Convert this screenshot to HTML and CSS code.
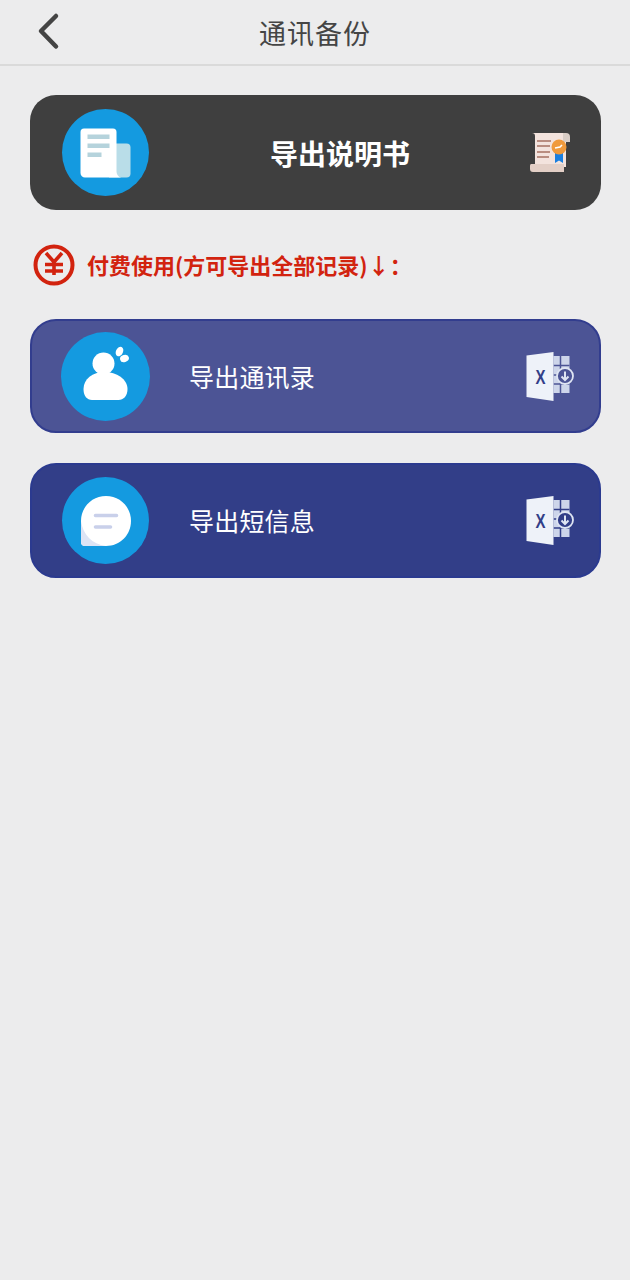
FILE: index.html
```html
<!DOCTYPE html>
<html lang="zh-CN">
<head>
    <meta charset="UTF-8">
    <meta name="viewport" content="width=device-width, initial-scale=1.0">
    <title>通讯备份</title>
    <link rel="stylesheet" href="styles.css">
</head>
<body>

    <header class="topbar">
        <a class="back" href="#">
            <svg width="24" height="38" viewBox="0 0 24 38"><path d="M20 4 L5 19 L20 34.5" fill="none" stroke="#444" stroke-width="4.5" stroke-linecap="round" stroke-linejoin="round"/></svg>
        </a>
        <h1>通讯备份</h1>
    </header>

    <main class="content">
        <!-- 说明书 -->
        <a class="card card-guide" href="#">
            <span class="circle">
                <svg width="54" height="54" viewBox="0 0 54 54">
                    <path d="M30 17.5h17.5a4 4 0 0 1 4 4v26a4 4 0 0 1-4 4H30z" fill="#b9dde8"/>
                    <path d="M1.5 6a3.5 3.5 0 0 1 3.5-3.5h29a3.5 3.5 0 0 1 3.5 3.5v39c0 3.5 2 6.5 5 6.5H6a4.5 4.5 0 0 1-4.5-4.5z" fill="#fff"/>
                    <path d="M8.5 8.5h22v4.5h-22zM8.5 17.5h22v4.5h-22zM8.5 26.5h14v4.5h-14z" fill="#b5d3dc"/>
                </svg>
            </span>
            <span class="guide-title">导出说明书</span>
            <svg class="end-icon" width="42" height="42" viewBox="0 0 42 42">
                <path d="M3 2h34v34H6V5a3 3 0 0 0-3-3z" fill="#f3e3dd"/>
                <path d="M34 2h3a4 4 0 0 1 4 4v5h-7z" fill="#d9cdc6"/>
                <path d="M2 33h33v8H4a3 3 0 0 1-3-3v-3a2 2 0 0 1 1-2z" fill="#e3cfc6"/>
                <path d="M8 10h14M8 15h13M8 21h13M8 26h12" stroke="#b98d80" stroke-width="1.8"/>
                <path d="M26 21h8v11l-4-2.5-4 2.5z" fill="#1a7fe0"/>
                <circle cx="30" cy="16" r="7.5" fill="#f09a3c"/>
                <path d="M26 17l5-1 2-2" stroke="#fff" stroke-width="1.6" fill="none"/>
            </svg>
        </a>

        <p class="notice">
            <svg width="44" height="44" viewBox="0 0 44 44">
                <circle cx="22" cy="22" r="18.5" fill="none" stroke="#d2230f" stroke-width="4"/>
                <path d="M14 10l8 9 8-9M13 21.5h18M13 28h18M22 19v13" fill="none" stroke="#d2230f" stroke-width="3.6"/>
            </svg>
            <span>付费使用(方可导出全部记录)↓：</span>
        </p>

        <!-- 导出 -->
        <a class="card card-contacts" href="#">
            <span class="circle circle-big">
                <svg width="52" height="60" viewBox="0 0 52 60">
                    <circle cx="23.5" cy="17.5" r="11" fill="#fff"/>
                    <path d="M3.5 43c0-10 9-17 21-17s23 7 23 17c0 7-4 11-9 11H12c-5 0-8.5-4-8.500-11z" fill="#fff"/>
                    <ellipse cx="39.5" cy="5.5" rx="3.500" ry="5" transform="rotate(25 39.5 5.5)" fill="#fff"/>
                    <ellipse cx="44.5" cy="12.5" rx="4.500" ry="3.500" transform="rotate(-15 44.5 12.5)" fill="#fff"/>
                </svg>
            </span>
            <span class="card-title">导出通讯录</span>
            <svg class="end-icon excel" width="50" height="50" viewBox="0 0 50 50">
                <path d="M27.5 4h16v37h-16z" fill="#cdd5ea"/>
                <path d="M27.5 13.5h16M27.5 23h16M27.5 32h16M34.5 4v37" stroke="currentColor" stroke-width="1.5"/>
                <path d="M0.5 3.5 27.5 0v49L0.5 45z" fill="#eef2f9"/>
                <text x="14.5" y="31.5" class="excel-x" textLength="10" lengthAdjust="spacingAndGlyphs">X</text>
                <circle cx="39" cy="24" r="8" fill="currentColor" stroke="#dfe5f3" stroke-width="1.8"/>
                <path d="M39 19.5v8M35.5 24.5l3.5 3.500 3.500-3.500" fill="none" stroke="#dfe5f3" stroke-width="2"/>
            </svg>
        </a>

        <a class="card card-sms" href="#">
            <span class="circle">
                <svg width="52" height="52" viewBox="0 0 52 52">
                    <path d="M1 26C1 12 12 1 26 1s25 11 25 25-11 25-25 25H5a4 4 0 0 1-4-4z" fill="#fff"/>
                    <path d="M1 26v21a4 4 0 0 0 4 4h21C12 49 3 40 1 26z" fill="#dde4f5"/>
                    <path d="M15.5 20.5h21M15.5 32h15" stroke="#c9d0ea" stroke-width="3.6" stroke-linecap="round"/>
                </svg>
            </span>
            <span class="card-title">导出短信息</span>
            <svg class="end-icon excel" width="50" height="50" viewBox="0 0 50 50">
                <path d="M27.5 4h16v37h-16z" fill="#cdd5ea"/>
                <path d="M27.5 13.5h16M27.5 23h16M27.5 32h16M34.5 4v37" stroke="currentColor" stroke-width="1.5"/>
                <path d="M0.5 3.5 27.5 0v49L0.5 45z" fill="#eef2f9"/>
                <text x="14.5" y="31.5" class="excel-x" textLength="10" lengthAdjust="spacingAndGlyphs">X</text>
                <circle cx="39" cy="24" r="8" fill="currentColor" stroke="#dfe5f3" stroke-width="1.8"/>
                <path d="M39 19.5v8M35.5 24.5l3.5 3.500 3.500-3.500" fill="none" stroke="#dfe5f3" stroke-width="2"/>
            </svg>
        </a>
    </main>

</body>
</html>
```

FILE: styles.css
```css
* { box-sizing: border-box; }
body { margin: 0; min-height: 1280px; background: #ececed; font-family: "Noto Sans CJK SC", "Noto Sans", sans-serif; }
a { text-decoration: none; }
.topbar { position: relative; height: 66px; display: flex; align-items: center; justify-content: center; border-bottom: 2px solid #dadada; }
.topbar h1 { margin: 0; font-size: 27px; font-weight: 400; color: #454545; letter-spacing: 1px; line-height: 1; }
.back { position: absolute; left: 36px; top: 12px; display: block; height: 38px; }
.content { padding: 29px 29px 0 30px; display: flex; flex-direction: column; }
.card { height: 115px; border-radius: 26px; display: flex; align-items: center; padding-left: 32px; color: #fff; position: relative; }
.card-guide { background: #3f3f3f; }
.card-contacts { background: #4c5495; border: 2px solid #323d8e; height: 114px; padding-left: 29px; }
.card-sms { background: #323e88; border: 2px solid #2b3a8f; margin-top: 30px; padding-left: 30px; }
.circle { width: 87px; height: 87px; border-radius: 50%; background: #149ae0; display: flex; align-items: center; justify-content: center; flex-shrink: 0; }
.circle-big { width: 89px; height: 89px; }
.guide-title { margin-left: 121px; margin-top: 1px; font-size: 28px; font-weight: 700; }
.card-title { margin-left: 39px; font-size: 25px; letter-spacing: 0.2px; }
.card-sms .card-title { margin-left: 40px; margin-top: -1px; }
.end-icon { position: absolute; right: 30px; top: 36px; }
.excel { right: 23px; top: 31px; color: #323e88; }
.card-contacts .excel { color: #4c5495; }
.excel-x { font-family: "Liberation Sans", sans-serif; font-weight: 700; font-size: 21px; fill: #323e88; text-anchor: middle; }
.notice { margin: 33px 0 32px 2px; height: 44px; display: flex; align-items: center; gap: 12px; color: #d2230f; font-size: 22px; font-weight: 700; }
.notice span { margin-top: -2px; }
.notice svg { flex-shrink: 0; margin-right: -1px; }
```
